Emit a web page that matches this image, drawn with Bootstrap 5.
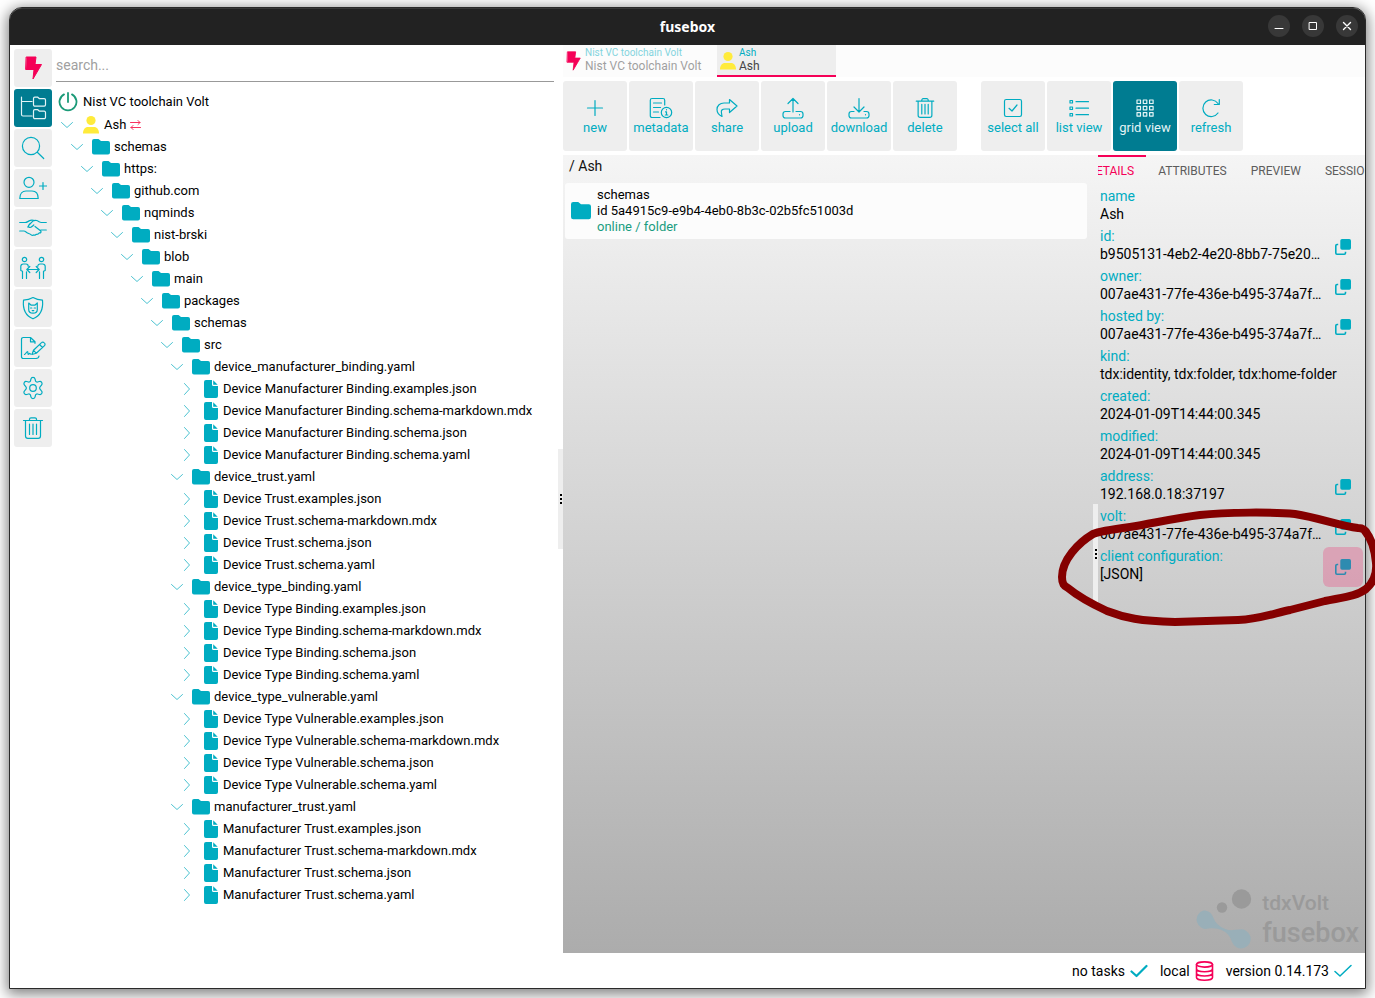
<!DOCTYPE html>
<html lang="en">
<head>
<meta charset="utf-8">
<meta name="viewport" content="width=device-width, initial-scale=1">
<title>fusebox</title>
<link href="https://cdn.jsdelivr.net/npm/bootstrap@5.3.0/dist/css/bootstrap.min.css" rel="stylesheet">
<style>
:root { --fb-teal: #00acc1; --fb-deep: #007c91; --fb-pink: #f50057; --fb-tile: #eee; --fb-ink: #111; }
body { font-family: Roboto, "Noto Sans", sans-serif; font-size: 14px; line-height: 16px; color: var(--fb-ink); background: #fff; min-height: 100vh; padding: 7px 9px 9px; overflow-x: hidden; }
a { text-decoration: none; color: inherit; }
svg { display: block; flex: none; fill: none; stroke: currentColor; stroke-linecap: round; stroke-linejoin: round; }
svg.solid { fill: currentColor; stroke: none; }
button { font-family: inherit; }
.app-window { border: 1px solid #2a2a2a; border-radius: 13px 13px 0 0; background: #fff; box-shadow: 0 3px 14px 2px rgba(0,0,0,.5); }
.title-bar { background: #222; color: #fff; height: 37px; border-radius: 12px 12px 0 0; border-top: 1px solid #383838; font: bold 14px/18px "Noto Sans", sans-serif; }
.title-buttons { right: 7px; top: 6px; gap: 12px; }
.title-buttons button { width: 22px; height: 22px; border: 0; border-radius: 50%; background: #383838; color: #fff; padding: 0; }
.split-grid { display: grid; grid-template-columns: minmax(0, 553fr) minmax(0, 802fr); }
.rail { gap: 2px; padding: 4px; }
.rail button { width: 38px; height: 38px; border: 0; border-radius: 3px; background: var(--fb-tile); color: var(--fb-teal); padding: 0; }
.rail button.on, .tool.on { background: var(--fb-deep); color: #e4f4f6; }
.rail button.volt { color: var(--fb-pink); }
.search-box { border: 0; border-bottom: 1px solid #999; border-radius: 0; padding: 4px 0 0; height: 37px; font-size: 14px; width: 100%; outline: 0; background: none; }
.search-box::placeholder { color: #a0a0a0; opacity: 1; }
.tree, .tree ul { list-style: none; margin: 0; padding: 0; }
.tree { font-size: 13px; color: #000; }
.tree ul ul { padding-left: 10px; }
.tree a { display: flex; align-items: center; height: 22px; white-space: nowrap; }
.tree .root-node { height: 24px; gap: 5px; padding-left: 2px; margin-top: 8px; }
.tree ul a { padding-left: 5px; gap: 4px; }
.tree .chev { color: #4dc3d1; margin-right: 5px; stroke-width: 1; }
.tree .leaf { margin: 0 1px 0 2px; }
.hue-teal { color: var(--fb-teal); }
.hue-pink { color: var(--fb-pink); }
.hue-sun { color: #ffeb3b; }
.hue-red { color: #f8315f; }
.hue-green { color: #1b9a78; }
.grip { width: 5px; height: 100px; background: #eee; color: #000; }
.tab-strip { background: #fcfcfc; height: 32px; }
.entity-tab { height: 32px; padding: 2px 4px 0 2px; gap: 2px; border-bottom: 2px solid transparent; font-size: 12px; line-height: 14px; color: #444; white-space: nowrap; }
.entity-tab small { font-size: 10px; line-height: 12px; color: var(--fb-teal); display: block; }
.entity-tab.first { width: 154px; }
.entity-tab.first span { opacity: .5; }
.entity-tab.on { width: 119px; background: #eee; border-color: var(--fb-pink); }
.toolbar { padding: 4px 0; gap: 24px; }
.tool { width: 64px; height: 70px; border: 0; border-radius: 3px; background: var(--fb-tile); color: var(--fb-teal); font-size: 13px; line-height: 16px; padding: 0; }
.tool-group { gap: 2px; }
.stage { background: linear-gradient(#f5f5f5, #acacac); }
.crumb { padding: 3px 6px 2px; line-height: 16px; margin-bottom: 7px; }
.item-card { background: #fcfcfc; border-radius: 3px; margin: 0 6px 0 2px; padding: 4px 6px; gap: 6px; font-size: 13px; line-height: 16px; color: #000; }
.online { color: #1a9c80; }
.detail-pane { width: 267px; }
.detail-tabs { height: 32px; font-size: 12px; overflow: hidden; }
.detail-tabs a { padding: 6px 12px 0; line-height: 16px; border-top: 2px solid transparent; color: #5c5c5c; flex: none; }
.detail-tabs a.on { color: var(--fb-pink); border-color: var(--fb-pink); margin-left: -22px; }
.fact { height: 40px; padding-left: 2px; }
.fact dt, .fact dd { font-size: 14px; line-height: 19px; font-weight: 400; margin: 0; white-space: nowrap; }
.fact dt { color: var(--fb-teal); line-height: 18px; }
.fact dd { color: #000; }
.fact button { width: 40px; height: 40px; flex: none; border: 0; border-radius: 6px; background: none; color: var(--fb-teal); margin-right: 2px; padding: 0; }
.fact button.hot { background: rgba(230, 100, 145, .42); color: #2e8bb0; }
.ink-ring { right: -12px; top: -41px; pointer-events: none; z-index: 3; color: #850000; }
.brand { right: 6px; bottom: 4px; color: #9a9a9a; gap: 10px; pointer-events: none; font-weight: 700; }
.brand b { display: block; font-size: 21px; line-height: 28px; font-weight: 500; }
.brand strong { display: block; font-size: 27px; line-height: 32px; font-weight: 500; }
.status-bar { height: 35px; gap: 12px; padding-right: 13px; color: #000; }
.status-bar span { gap: 5px; }
</style>
</head>
<body class="d-flex flex-column">
<svg class="d-none" aria-hidden="true">
  <symbol id="bolt" viewBox="0 0 24 24"><path d="M5.500 1h9.500l-1 7.500h6.500L12 23l1-9.500H5z" fill="currentColor" stroke="currentColor" stroke-width="1"/></symbol>
  <symbol id="down" viewBox="0 0 12 12"><path d="M.5 3.500L6 8.500l5.500-5"/></symbol>
  <symbol id="right" viewBox="0 0 12 12"><path d="M3.500.5L8.500 6l-5 5.500"/></symbol>
  <symbol id="dir" viewBox="0 0 18 18"><path d="M0 3a2 2 0 0 1 2-2h4.500l2.500 2h7a2 2 0 0 1 2 2v9.500a2 2 0 0 1-2 2H2a2 2 0 0 1-2-2z"/></symbol>
  <symbol id="doc" viewBox="0 0 14 18"><path d="M2 0h6v4.500A1.500 1.500 0 0 0 9.500 6H14v10a2 2 0 0 1-2 2H2a2 2 0 0 1-2-2V2a2 2 0 0 1 2-2zm7.200.3L13.700 4.800H9.200z"/></symbol>
  <symbol id="person" viewBox="0 0 18 20"><circle cx="9" cy="5.500" r="4.600"/><path d="M1 18.500c0-4 2-6.500 5-6.500h6c3 0 5 2.500 5 6.500z"/></symbol>
  <symbol id="bin" viewBox="0 0 24 24"><path d="M2.500 4.500h19M8.500 4.500V3.300a1.500 1.500 0 0 1 1.500-1.500h4a1.500 1.500 0 0 1 1.500 1.500v1.200M4.500 4.500v15.500a2.300 2.300 0 0 0 2.300 2.300h10.400a2.300 2.300 0 0 0 2.300-2.300V4.500M8.500 8v10.500M12 8v10.500M15.500 8v10.500"/></symbol>
  <symbol id="copy" viewBox="0 0 16 16"><rect x="5.300" y="0" width="10.700" height="10.700" rx="1.700" fill="currentColor" stroke="none"/><path d="M3.200 5.500H2A1.200 1.200 0 0 0 .8 6.700V14A1.200 1.200 0 0 0 2 15.200h7.300a1.200 1.200 0 0 0 1.200-1.200v-1.200" stroke-width="1.600" stroke-linecap="butt"/></symbol>
  <symbol id="dots" viewBox="0 0 4 12"><path d="M1 1h2v2H1zM1 5h2v2H1zM1 9h2v2H1z" fill="currentColor" stroke="none"/></symbol>
</svg>

<div class="app-window flex-grow-1 d-flex flex-column">
  <header class="title-bar position-relative d-flex align-items-center justify-content-center">
    <span>fusebox</span>
    <div class="title-buttons position-absolute d-flex">
      <button type="button" class="d-flex align-items-center justify-content-center" aria-label="Minimise"><svg width="10" height="10" viewBox="0 0 10 10" stroke-linecap="butt"><path d="M1 7.500h8"/></svg></button>
      <button type="button" class="d-flex align-items-center justify-content-center" aria-label="Maximise"><svg width="10" height="10" viewBox="0 0 10 10"><path d="M1.500 1.500h7v7h-7z"/></svg></button>
      <button type="button" class="d-flex align-items-center justify-content-center" aria-label="Close"><svg width="10" height="10" viewBox="0 0 10 10" stroke-width="1.400"><path d="M1.500 1.500l7 7M8.500 1.500l-7 7"/></svg></button>
    </div>
  </header>

  <main class="split-grid flex-grow-1">
    <section class="d-flex">
      <nav class="rail d-flex flex-column" aria-label="Sections">
        <button type="button" class="volt d-flex align-items-center justify-content-center" aria-label="Volt"><svg width="24" height="24"><use href="#bolt"/></svg></button>
        <button type="button" class="on d-flex align-items-center justify-content-center" aria-label="Files"><svg width="28" height="26" viewBox="0 0 28 26" stroke-width="1.200"><path d="M2.500 2v17.500a1.500 1.500 0 0 0 1.500 1.500h9M2.500 6.500H13M14.500 3.500A1.300 1.300 0 0 1 15.800 2.200h3l1.700 1.500h4.700a1.300 1.300 0 0 1 1.300 1.300v4.800a1.300 1.300 0 0 1-1.300 1.300h-9.400a1.300 1.300 0 0 1-1.300-1.300zM14.500 16a1.300 1.300 0 0 1 1.300-1.300h3l1.700 1.500h4.700a1.300 1.300 0 0 1 1.300 1.300v4.800a1.300 1.300 0 0 1-1.300 1.300h-9.400a1.300 1.300 0 0 1-1.300-1.300z"/></svg></button>
        <button type="button" class="d-flex align-items-center justify-content-center" aria-label="Search"><svg width="24" height="24" viewBox="0 0 24 24" stroke-width="1.200"><circle cx="10" cy="10" r="8.600"/><path d="M16.300 16.300l6.400 6.200"/></svg></button>
        <button type="button" class="d-flex align-items-center justify-content-center" aria-label="Add identity"><svg width="28" height="24" viewBox="0 0 28 24" stroke-width="1.200"><circle cx="10" cy="6.300" r="5"/><path d="M.8 22.500c0-5 2.700-7.500 6.200-7.500h6c3.500 0 6.200 2.500 6.200 7.500zM24 6.500v7M20.500 10h7"/></svg></button>
        <button type="button" class="d-flex align-items-center justify-content-center" aria-label="Agreements"><svg width="28" height="20" viewBox="0 0 28 20" stroke-width="1.200"><path d="M.7 4.500h5.500c1.500 0 2.600-.9 3.900-1.600C11.400 2.200 13 2 14.500 2.400M27.300 4.500h-5c-1.600 0-3-1.500-4.700-2-1.300-.4-2.700-.2-3.800.6L10 7c-1 1-.3 2.700 1.200 2.500 1.500-.2 2.500-1.600 3.600-2.500M16 8.500l5.500 4.200c1.200 1 .2 2.600-1.200 2.200M27.300 12h-5.500M.7 13h4c1.300 0 2 .7 3 1.500 1.500 1.100 3 1 4.500 2.400.8.800 2 .7 2.600 0 .8.500 1.900.2 2.300-.6 1.200.3 2.400-.2 3.200-1.400M10.500 6l-1.700 3"/></svg></button>
        <button type="button" class="d-flex align-items-center justify-content-center" aria-label="Connections"><svg width="26" height="24" viewBox="0 0 26 24" stroke-width="1.200"><circle cx="4.500" cy="3.500" r="2.200"/><circle cx="21.500" cy="3.500" r="2.200"/><path d="M2.500 22.500v-7.200l-1.700-.8v-4a2.500 2.500 0 0 1 2.500-2.500H6a2.200 2.200 0 0 1 2.200 2.200M6.500 22.500v-6.700M23.500 22.500v-7.200l1.700-.8v-4A2.500 2.500 0 0 0 22.700 8H20a2.200 2.200 0 0 0-2.200 2.200M19.500 22.500v-6.700M7 13.500h12M9.800 10.500l-3 3 3 3M16.200 10.500l3 3-3 3"/></svg></button>
        <button type="button" class="d-flex align-items-center justify-content-center" aria-label="Protection"><svg width="24" height="24" viewBox="0 0 24 24" stroke-width="1.200"><path d="M12 1.500c3 1.700 6 2.500 9.500 2.700.8 8.300-1.700 15.300-9.500 18.600C4.200 19.500 1.700 12.500 2.500 4.200 6 4 9 3.200 12 1.500z"/><path d="M7.700 7l2.500 2.200h3.600L16.300 7v6.500c0 2.200-1.500 3.700-4.300 3.700s-4.300-1.500-4.300-3.700zM9.500 12h1.300M13.200 12h1.300M11.200 14.600h1.600"/></svg></button>
        <button type="button" class="d-flex align-items-center justify-content-center" aria-label="Sign"><svg width="26" height="24" viewBox="0 0 26 24" stroke-width="1.200"><path d="M16 22.500H3.200A1.700 1.700 0 0 1 1.500 20.800V3.200a1.700 1.700 0 0 1 1.700-1.700h7.300l4.500 4.300M10.500 1.500v4.300H15v1.500M4.500 18.500c1.500-.5 2-3 3-3 .8 0 0 2.800.8 2.800.6 0 .8-1 1.300-1 .4 0 .4.800 1.400.8"/><path d="M12 18.500l1.500-4.200 8-7.700a1.700 1.700 0 0 1 2.500 0l.5.500a1.700 1.700 0 0 1 0 2.500l-8.200 7.600zM19.500 8.500l3 3M13.500 14.300l2.800 2.900M19 20c-.2 1.600-1.200 2.500-3 2.500"/></svg></button>
        <button type="button" class="d-flex align-items-center justify-content-center" aria-label="Settings"><svg width="24" height="24" viewBox="0 0 24 24" stroke-width="1.200"><circle cx="12" cy="12" r="3.300"/><path d="M9.900 3.100c.5-2.200 3.700-2.200 4.200 0l.4 1.700c.2.900 1.200 1.500 2.100 1.200l1.700-.5c2.100-.6 3.700 2.100 2.200 3.700l-1.300 1.500c-.7.700-.7 1.900 0 2.600l1.300 1.500c1.500 1.600-.1 4.300-2.200 3.700l-1.700-.5c-.9-.3-1.900.3-2.100 1.200l-.4 1.700c-.5 2.200-3.700 2.200-4.200 0l-.4-1.700c-.2-.9-1.200-1.500-2.100-1.200l-1.700.5c-2.100.6-3.700-2.100-2.200-3.700l1.300-1.500c.7-.7.700-1.900 0-2.600L3.500 9.200c-1.500-1.600.1-4.300 2.200-3.700l1.700.5c.9.300 1.900-.3 2.100-1.200z"/></svg></button>
        <button type="button" class="d-flex align-items-center justify-content-center" aria-label="Bin"><svg width="24" height="24" stroke-width="1.200"><use href="#bin"/></svg></button>
      </nav>
      <div class="flex-grow-1 pe-1">
        <input class="search-box" type="text" placeholder="search..." aria-label="Search">
        <ul class="tree">
          <li><a href="#" class="root-node"><svg class="hue-green" width="20" height="20" viewBox="0 0 20 20" stroke-width="1.800"><path d="M10 1v9M6 2.400a8.500 8.500 0 1 0 8 0"/></svg>Nist VC toolchain Volt</a>
          <ul><li><a href="#"><svg class="chev" width="12" height="12"><use href="#down"/></svg><svg class="solid hue-sun" width="18" height="20"><use href="#person"/></svg>Ash <svg class="hue-red" width="11" height="10" viewBox="0 0 11 10" stroke-width="1"><path d="M.5 2.500h9.500M8 .5l2 2-2 2M10.500 7.500H1M3 5.500l-2 2 2 2"/></svg></a>
          <ul><li><a href="#"><svg class="chev" width="12" height="12"><use href="#down"/></svg><svg class="solid hue-teal" width="18" height="18"><use href="#dir"/></svg>schemas</a>
          <ul><li><a href="#"><svg class="chev" width="12" height="12"><use href="#down"/></svg><svg class="solid hue-teal" width="18" height="18"><use href="#dir"/></svg>https:</a>
          <ul><li><a href="#"><svg class="chev" width="12" height="12"><use href="#down"/></svg><svg class="solid hue-teal" width="18" height="18"><use href="#dir"/></svg>github.com</a>
          <ul><li><a href="#"><svg class="chev" width="12" height="12"><use href="#down"/></svg><svg class="solid hue-teal" width="18" height="18"><use href="#dir"/></svg>nqminds</a>
          <ul><li><a href="#"><svg class="chev" width="12" height="12"><use href="#down"/></svg><svg class="solid hue-teal" width="18" height="18"><use href="#dir"/></svg>nist-brski</a>
          <ul><li><a href="#"><svg class="chev" width="12" height="12"><use href="#down"/></svg><svg class="solid hue-teal" width="18" height="18"><use href="#dir"/></svg>blob</a>
          <ul><li><a href="#"><svg class="chev" width="12" height="12"><use href="#down"/></svg><svg class="solid hue-teal" width="18" height="18"><use href="#dir"/></svg>main</a>
          <ul><li><a href="#"><svg class="chev" width="12" height="12"><use href="#down"/></svg><svg class="solid hue-teal" width="18" height="18"><use href="#dir"/></svg>packages</a>
          <ul><li><a href="#"><svg class="chev" width="12" height="12"><use href="#down"/></svg><svg class="solid hue-teal" width="18" height="18"><use href="#dir"/></svg>schemas</a>
          <ul><li><a href="#"><svg class="chev" width="12" height="12"><use href="#down"/></svg><svg class="solid hue-teal" width="18" height="18"><use href="#dir"/></svg>src</a>
          <ul id="schemaFolders"></ul>
          </li></ul></li></ul></li></ul></li></ul></li></ul></li></ul></li></ul></li></ul></li></ul></li></ul></li></ul>
          </li>
        </ul>
      </div>
      <div class="grip align-self-center d-flex align-items-center justify-content-center"><svg width="4" height="12"><use href="#dots"/></svg></div>
    </section>

    <section class="d-flex flex-column">
      <nav class="tab-strip d-flex" aria-label="Open items">
        <a href="#" class="entity-tab first d-flex"><svg class="hue-pink mt-1" width="18" height="20" viewBox="3 0 20 24"><use href="#bolt" width="24" height="24"/></svg><span><small>Nist VC toolchain Volt</small>Nist VC toolchain Volt</span></a>
        <a href="#" class="entity-tab on d-flex"><svg class="solid hue-sun mt-1" width="18" height="20"><use href="#person"/></svg><span><small>Ash</small>Ash</span></a>
      </nav>
      <div class="toolbar d-flex">
        <div class="tool-group d-flex">
        <button type="button" class="tool d-flex flex-column align-items-center justify-content-center"><svg width="24" height="24" viewBox="0 0 24 24" stroke-width="1.200"><path d="M12 4.500v15M4.500 12h15"/></svg>new</button>
        <button type="button" class="tool d-flex flex-column align-items-center justify-content-center"><svg width="24" height="24" viewBox="0 0 24 24" stroke-width="1.200"><path d="M11 21.500H3A1.700 1.700 0 0 1 1.300 19.800V4.200A1.700 1.700 0 0 1 3 2.500h11a1.700 1.700 0 0 1 1.700 1.700V9M4.500 7h8M4.500 11.500h7M4.500 16h5"/><circle cx="17.500" cy="16.500" r="5.200"/><path d="M16.500 15.800h1v3M16.300 19h2.500M17.500 13.700v.1"/></svg>metadata</button>
        <button type="button" class="tool d-flex flex-column align-items-center justify-content-center"><svg width="24" height="24" viewBox="0 0 24 24" stroke-width="1.200"><path d="M14.500 3.500l7.500 6.500-7.500 6.500V13H10c-3 0-4 1.500-3.600 3.500L7 20.500c-3-1.500-5-4-5-7 0-4 3-6.500 7-6.500h5.500z"/></svg>share</button>
        <button type="button" class="tool d-flex flex-column align-items-center justify-content-center"><svg width="24" height="24" viewBox="0 0 24 24" stroke-width="1.200"><path d="M12 16V2.500M7 7.500l5-5 5 5M9 15.500H4.500A2.500 2.500 0 0 0 2 18v1.500A2.500 2.500 0 0 0 4.500 22h15a2.500 2.500 0 0 0 2.500-2.500V18a2.500 2.500 0 0 0-2.500-2.500H15M18.500 18.700v.1"/></svg>upload</button>
        <button type="button" class="tool d-flex flex-column align-items-center justify-content-center"><svg width="24" height="24" viewBox="0 0 24 24" stroke-width="1.200"><path d="M12 2.500V16M7 11l5 5 5-5M7 15.500H4.500A2.500 2.500 0 0 0 2 18v1.500A2.500 2.500 0 0 0 4.500 22h15a2.500 2.500 0 0 0 2.500-2.500V18a2.500 2.500 0 0 0-2.500-2.500H17M18.500 18.700v.1"/></svg>download</button>
        <button type="button" class="tool d-flex flex-column align-items-center justify-content-center"><svg width="22" height="24" viewBox="0 0 24 24" stroke-width="1.300"><use href="#bin" width="24" height="24"/></svg>delete</button>
        </div>
        <div class="tool-group d-flex">
        <button type="button" class="tool d-flex flex-column align-items-center justify-content-center"><svg width="24" height="24" viewBox="0 0 24 24" stroke-width="1.200"><rect x="3.500" y="3.500" width="17" height="17" rx="1.700"/><path d="M8 12.300l3 2.700 5-6"/></svg>select all</button>
        <button type="button" class="tool d-flex flex-column align-items-center justify-content-center"><svg width="24" height="24" viewBox="0 0 24 24" stroke-width="1.200"><path d="M3 4.500h2.500V7H3zM3 11h2.500v2.500H3zM3 17.500h2.500V20H3zM9 5.700h12.500M9 12.200h12.500M9 18.700h12.500"/></svg>list view</button>
        <button type="button" class="tool on d-flex flex-column align-items-center justify-content-center"><svg width="24" height="24" viewBox="0 0 24 24" stroke-width="1.200"><path d="M4 4h3.500v3.500H4zM10.300 4h3.500v3.500h-3.500zM16.600 4h3.500v3.500h-3.500zM4 10.300h3.500v3.500H4zM10.300 10.300h3.500v3.500h-3.500zM16.600 10.300h3.500v3.500h-3.500zM4 16.600h3.500v3.500H4zM10.300 16.600h3.500v3.500h-3.500zM16.600 16.600h3.500v3.500h-3.500z"/></svg>grid view</button>
        <button type="button" class="tool d-flex flex-column align-items-center justify-content-center"><svg width="24" height="24" viewBox="0 0 24 24" stroke-width="1.200"><path d="M19 17a8.300 8.300 0 1 1 0-9.500M20.300 3.500v5h-5"/></svg>refresh</button>
        </div>
      </div>

      <div class="stage flex-grow-1 d-flex position-relative">
        <div class="flex-grow-1">
          <div class="crumb">/ Ash</div>
          <a href="#" class="item-card d-flex align-items-center"><svg class="solid hue-teal" width="20" height="20"><use href="#dir"/></svg><span>schemas<br>id 5a4915c9-e9b4-4eb0-8b3c-02b5fc51003d<br><span class="online">online / folder</span></span></a>
        </div>
        <div class="grip align-self-center d-flex align-items-center justify-content-center"><svg width="4" height="12"><use href="#dots"/></svg></div>
        <aside class="detail-pane">
          <nav class="detail-tabs d-flex" aria-label="Details"><a href="#" class="on">DETAILS</a><a href="#">ATTRIBUTES</a><a href="#">PREVIEW</a><a href="#">SESSIONS</a></nav>
          <dl class="m-0">
            <div class="fact"><dt>name</dt><dd>Ash</dd></div>
            <div class="fact d-flex"><div class="flex-grow-1"><dt>id:</dt><dd>b9505131-4eb2-4e20-8bb7-75e20…</dd></div><button type="button" class="d-flex align-items-center justify-content-center" aria-label="Copy id"><svg width="16" height="16"><use href="#copy"/></svg></button></div>
            <div class="fact d-flex"><div class="flex-grow-1"><dt>owner:</dt><dd>007ae431-77fe-436e-b495-374a7f…</dd></div><button type="button" class="d-flex align-items-center justify-content-center" aria-label="Copy owner"><svg width="16" height="16"><use href="#copy"/></svg></button></div>
            <div class="fact d-flex"><div class="flex-grow-1"><dt>hosted by:</dt><dd>007ae431-77fe-436e-b495-374a7f…</dd></div><button type="button" class="d-flex align-items-center justify-content-center" aria-label="Copy host"><svg width="16" height="16"><use href="#copy"/></svg></button></div>
            <div class="fact"><dt>kind:</dt><dd>tdx:identity, tdx:folder, tdx:home-folder</dd></div>
            <div class="fact"><dt>created:</dt><dd>2024-01-09T14:44:00.345</dd></div>
            <div class="fact"><dt>modified:</dt><dd>2024-01-09T14:44:00.345</dd></div>
            <div class="fact d-flex"><div class="flex-grow-1"><dt>address:</dt><dd>192.168.0.18:37197</dd></div><button type="button" class="d-flex align-items-center justify-content-center" aria-label="Copy address"><svg width="16" height="16"><use href="#copy"/></svg></button></div>
            <div class="fact d-flex"><div class="flex-grow-1"><dt>volt:</dt><dd>007ae431-77fe-436e-b495-374a7f…</dd></div><button type="button" class="d-flex align-items-center justify-content-center" aria-label="Copy volt"><svg width="16" height="16"><use href="#copy"/></svg></button></div>
            <div class="fact d-flex position-relative"><div class="flex-grow-1"><dt>client configuration:</dt><dd>[JSON]</dd></div><button type="button" class="hot d-flex align-items-center justify-content-center" aria-label="Copy client configuration"><svg width="16" height="16"><use href="#copy"/></svg></button>
              <svg class="ink-ring position-absolute" width="322" height="124" viewBox="1055 506 322 124" stroke-width="8"><path d="M1368 535C1366 530 1362 528 1358 528C1340 526 1320 518 1295 514C1275 512 1225 512 1200 515C1175 518 1150 524 1130 527C1115 529 1100 531 1093 534C1078 543 1062 560 1062 577C1062 584 1064 586 1068 588C1080 598 1092 604 1107 611C1125 618 1140 621 1175 622L1238 620C1260 619 1275 613 1290 610L1325 601C1345 597 1357 596 1366 589C1373 583 1377 574 1376 563C1375 551 1372 539 1365 531"/></svg>
            </div>
          </dl>
        </aside>
        <div class="brand position-absolute d-flex">
          <svg class="solid" width="58" height="60" viewBox="0 0 58 60"><circle cx="47.500" cy="10" r="9.700"/><circle cx="28" cy="18.500" r="5.200"/><path fill="#99afb8" d="M9.500 21.500c5 0 8 2.500 9.800 7 2.200 6 6 9 12 11.500 4.500 2 9 .8 13.500.6a9.600 9.600 0 1 1-6.800 12.500c-2-6-4.500-9-9.500-11.500-5-2.500-9-2.800-14-2A9.300 9.300 0 1 1 9.500 21.500z"/></svg>
          <div><b>tdxVolt</b><strong>fusebox</strong></div>
        </div>
      </div>
    </section>
  </main>

  <footer class="status-bar d-flex align-items-center justify-content-end">
    <span class="d-flex align-items-center">no tasks <svg class="hue-teal" width="18" height="14" viewBox="0 0 18 14" stroke-width="2.200"><path d="M1.500 7.500l5 4.500L16.500 2"/></svg></span>
    <span class="d-flex align-items-center">local <svg class="hue-pink" width="19" height="20" viewBox="0 0 19 20" stroke-width="1.600"><ellipse cx="9.500" cy="3.500" rx="8" ry="2.600"/><path d="M1.500 3.500v13c0 1.500 3.500 2.700 8 2.700s8-1.200 8-2.700v-13M1.500 8c0 1.500 3.500 2.700 8 2.700s8-1.200 8-2.700M1.500 12.300c0 1.500 3.500 2.700 8 2.700s8-1.200 8-2.700"/></svg></span>
    <span class="d-flex align-items-center">version 0.14.173 <svg class="hue-teal" width="18" height="14" viewBox="0 0 18 14" stroke-width="1.500"><path d="M1 7.500l5 4.500L17 1.500"/></svg></span>
  </footer>
</div>
<script src="https://cdn.jsdelivr.net/npm/bootstrap@5.3.0/dist/js/bootstrap.bundle.min.js"></script>
<script>
// Every schema folder holds the same four generated files.
const folders = [
  ['device_manufacturer_binding.yaml', 'Device Manufacturer Binding'],
  ['device_trust.yaml', 'Device Trust'],
  ['device_type_binding.yaml', 'Device Type Binding'],
  ['device_type_vulnerable.yaml', 'Device Type Vulnerable'],
  ['manufacturer_trust.yaml', 'Manufacturer Trust']
];
const kinds = ['.examples.json', '.schema-markdown.mdx', '.schema.json', '.schema.yaml'];
const leaf = name => `<li><a href="#"><svg class="chev" width="12" height="12"><use href="#right"/></svg><svg class="solid leaf hue-teal" width="14" height="18"><use href="#doc"/></svg>${name}</a></li>`;
document.getElementById('schemaFolders').innerHTML = folders.map(([folder, base]) =>
  `<li><a href="#"><svg class="chev" width="12" height="12"><use href="#down"/></svg><svg class="solid hue-teal" width="18" height="18"><use href="#dir"/></svg>${folder}</a><ul>${kinds.map(k => leaf(base + k)).join('')}</ul></li>`).join('');
</script>
</body>
</html>
